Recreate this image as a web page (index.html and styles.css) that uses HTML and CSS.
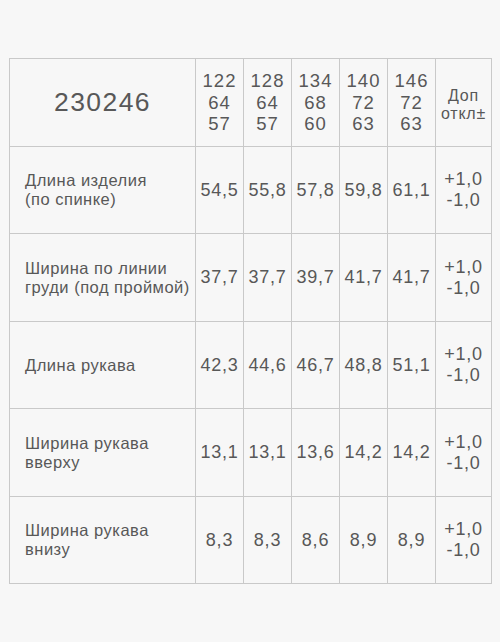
FILE: index.html
```html
<!DOCTYPE html>
<html lang="ru">
<head>
<meta charset="utf-8">
<link rel="stylesheet" href="styles.css">
</head>
<body>
<div class="page">
  <table class="sizes">
    <colgroup>
      <col class="c-name">
      <col class="c-size"><col class="c-size"><col class="c-size"><col class="c-size"><col class="c-size">
      <col class="c-tol">
    </colgroup>
    <thead>
      <tr class="r-head">
        <th class="model">230246</th>
        <th class="size">122<br>64<br>57</th>
        <th class="size">128<br>64<br>57</th>
        <th class="size">134<br>68<br>60</th>
        <th class="size">140<br>72<br>63</th>
        <th class="size">146<br>72<br>63</th>
        <th class="tol-head">Доп<br>откл±</th>
      </tr>
    </thead>
    <tbody>
      <tr class="r-a">
        <td class="name">Длина изделия<br>(по спинке)</td>
        <td class="val">54,5</td><td class="val">55,8</td><td class="val">57,8</td><td class="val">59,8</td><td class="val">61,1</td>
        <td class="tol">+1,0<br>-1,0</td>
      </tr>
      <tr class="r-b">
        <td class="name">Ширина по линии<br>груди (под проймой)</td>
        <td class="val">37,7</td><td class="val">37,7</td><td class="val">39,7</td><td class="val">41,7</td><td class="val">41,7</td>
        <td class="tol">+1,0<br>-1,0</td>
      </tr>
      <tr class="r-a">
        <td class="name">Длина рукава</td>
        <td class="val">42,3</td><td class="val">44,6</td><td class="val">46,7</td><td class="val">48,8</td><td class="val">51,1</td>
        <td class="tol">+1,0<br>-1,0</td>
      </tr>
      <tr class="r-b">
        <td class="name">Ширина рукава<br>вверху</td>
        <td class="val">13,1</td><td class="val">13,1</td><td class="val">13,6</td><td class="val">14,2</td><td class="val">14,2</td>
        <td class="tol">+1,0<br>-1,0</td>
      </tr>
      <tr class="r-a">
        <td class="name">Ширина рукава<br>внизу</td>
        <td class="val">8,3</td><td class="val">8,3</td><td class="val">8,6</td><td class="val">8,9</td><td class="val">8,9</td>
        <td class="tol">+1,0<br>-1,0</td>
      </tr>
    </tbody>
  </table>
</div>
</body>
</html>
```

FILE: styles.css
```css
html, body {
  margin: 0;
  padding: 0;
  background: #f7f7f7;
}

.page {
  width: 500px;
  height: 642px;
  box-sizing: border-box;
  padding: 58px 9px 0 9px;
  font-family: "Liberation Sans", Arial, sans-serif;
  color: #585858;
}

.sizes {
  border-collapse: collapse;
  table-layout: fixed;
  width: 482px;
}

.c-name { width: 186px; }
.c-size { width: 48px; }
.c-tol { width: 56px; }

.sizes th,
.sizes td {
  border: 1px solid #c9c9c9;
  padding: 0;
  vertical-align: middle;
  font-weight: 400;
}

.r-head { height: 88px; }
.r-a { height: 87px; }
.r-b { height: 88px; }

.model {
  font-size: 26.5px;
  letter-spacing: 1.4px;
  text-align: center;
}

.size {
  font-size: 18.5px;
  line-height: 21.5px;
  letter-spacing: 1px;
  text-align: center;
}

.tol-head {
  font-size: 16px;
  line-height: 18px;
  letter-spacing: 0.8px;
  text-align: center;
  padding-top: 4px !important;
}

.name {
  font-size: 16.5px;
  line-height: 19px;
  letter-spacing: 0.5px;
  text-align: left;
  padding-left: 15px !important;
}

.val {
  font-size: 18px;
  letter-spacing: 0.8px;
  text-align: center;
}

.tol {
  font-size: 18px;
  line-height: 21px;
  letter-spacing: 0.8px;
  text-align: center;
}
```
